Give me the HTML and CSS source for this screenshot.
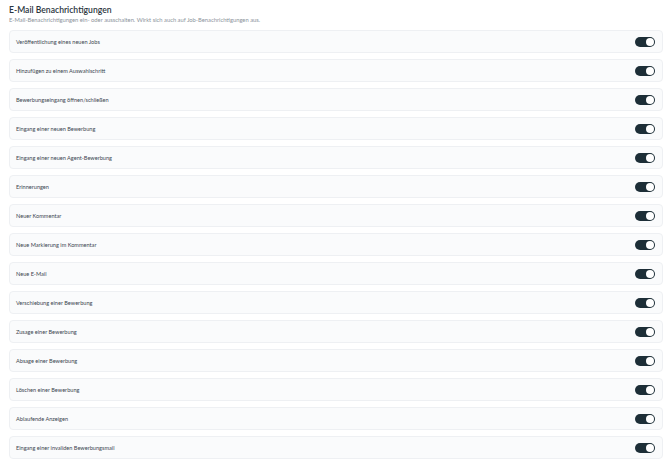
FILE: index.html
```html
<!DOCTYPE html>
<html lang="de">
<head>
<meta charset="utf-8">
<title>E-Mail Benachrichtigungen</title>
<link rel="stylesheet" href="styles.css">
</head>
<body>
<main class="settings">
  <header class="settings-head">
    <h1 class="settings-title">E-Mail Benachrichtigungen</h1>
    <p class="settings-sub">E-Mail-Benachrichtigungen ein- oder ausschalten. Wirkt sich auch auf Job-Benachrichtigungen aus.</p>
  </header>
  <ul class="option-list">
    <li class="option"><span class="option-label">Veröffentlichung eines neuen Jobs</span><span class="toggle on"></span></li>
    <li class="option"><span class="option-label">Hinzufügen zu einem Auswahlschritt</span><span class="toggle on"></span></li>
    <li class="option"><span class="option-label">Bewerbungseingang öffnen/schließen</span><span class="toggle on"></span></li>
    <li class="option"><span class="option-label">Eingang einer neuen Bewerbung</span><span class="toggle on"></span></li>
    <li class="option"><span class="option-label">Eingang einer neuen Agent-Bewerbung</span><span class="toggle on"></span></li>
    <li class="option"><span class="option-label">Erinnerungen</span><span class="toggle on"></span></li>
    <li class="option"><span class="option-label">Neuer Kommentar</span><span class="toggle on"></span></li>
    <li class="option"><span class="option-label">Neue Markierung im Kommentar</span><span class="toggle on"></span></li>
    <li class="option"><span class="option-label">Neue E-Mail</span><span class="toggle on"></span></li>
    <li class="option"><span class="option-label">Verschiebung einer Bewerbung</span><span class="toggle on"></span></li>
    <li class="option"><span class="option-label">Zusage einer Bewerbung</span><span class="toggle on"></span></li>
    <li class="option"><span class="option-label">Absage einer Bewerbung</span><span class="toggle on"></span></li>
    <li class="option"><span class="option-label">Löschen einer Bewerbung</span><span class="toggle on"></span></li>
    <li class="option"><span class="option-label">Ablaufende Anzeigen</span><span class="toggle on"></span></li>
    <li class="option"><span class="option-label">Eingang einer invaliden Bewerbungsmail</span><span class="toggle on"></span></li>
  </ul>
</main>
</body>
</html>
```

FILE: styles.css
```css
* { box-sizing: border-box; }

html, body {
  margin: 0;
  padding: 0;
  background: #ffffff;
}

body {
  font-family: Lato, "Noto Sans", sans-serif;
  color: #2f3b45;
}

.settings {
  padding: 5px 7px 0 9px;
}

.settings-head {
  margin-bottom: 6px;
}

.settings-title {
  margin: 0;
  font-size: 8.6px;
  font-weight: 600;
  line-height: 11px;
  color: #2b3640;
}

.settings-sub {
  margin: 0;
  font-size: 5.8px;
  line-height: 8px;
  color: #8b939b;
}

.option-list {
  list-style: none;
  margin: 0;
  padding: 0;
  display: flex;
  flex-direction: column;
  gap: 6px;
}

.option {
  height: 23px;
  display: flex;
  align-items: center;
  justify-content: space-between;
  padding: 0 7px 0 6px;
  background: #fafbfc;
  border: 1px solid #eef0f3;
  border-radius: 4px;
}

.option-label {
  font-size: 5.6px;
  color: #3b4650;
}

.toggle {
  position: relative;
  width: 20px;
  height: 10px;
  border-radius: 5px;
  background: #1d2e37;
}

.toggle::after {
  content: "";
  position: absolute;
  top: 1px;
  right: 1px;
  width: 8px;
  height: 8px;
  border-radius: 50%;
  background: #ffffff;
}
```
